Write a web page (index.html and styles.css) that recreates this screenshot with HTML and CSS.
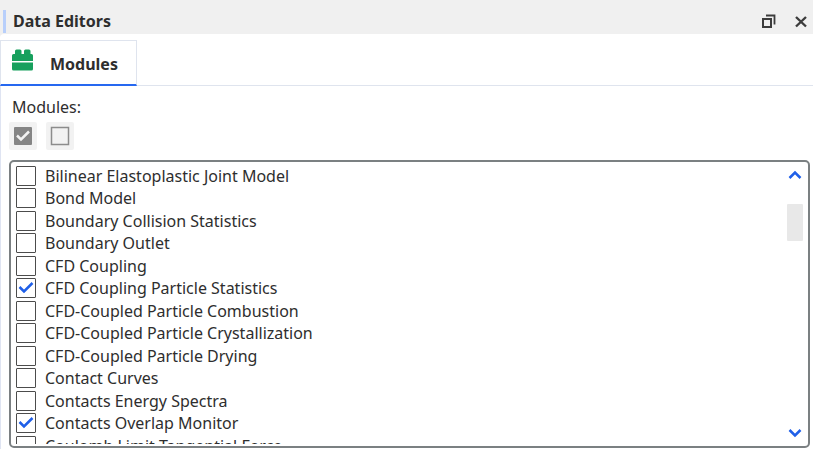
FILE: index.html
```html
<!DOCTYPE html>
<html lang="en">
<head>
    <meta charset="UTF-8">
    <meta name="viewport" content="width=device-width, initial-scale=1.0">
    <title>Data Editors</title>
    <link rel="stylesheet" href="styles.css">
</head>
<body>
    <header class="title-bar">
        <h1 class="title">Data Editors</h1>
        <button class="window-button" aria-label="Float">
            <svg width="16" height="16" viewBox="0 0 16 16" fill="none" stroke="#3c3c3c" stroke-width="2">
                <rect x="2" y="6" width="8" height="8"/>
                <path d="M5 2.500H13.500V11.500" stroke-width="1.800"/>
            </svg>
        </button>
        <button class="window-button" aria-label="Close">
            <svg width="16" height="16" viewBox="0 0 16 16" fill="none" stroke="#3c3c3c" stroke-width="2.400">
                <path d="M3 4L13 13.500M13 4L3 13.500"/>
            </svg>
        </button>
    </header>

    <main class="editor">
        <nav class="tabs">
            <button class="tab">
                <svg width="22" height="22" viewBox="0 0 22 22" fill="#17a05d">
                    <path d="M0 12V6.500Q0 5 1.500 5H3V2Q3 0.500 4.500 0.500H8Q9.500 0.500 9.500 2V5H12V2Q12 0.500 13.500 0.500H17Q18.500 0.500 18.500 2V5H19.500Q21 5 21 6.500V12Z"/>
                    <path d="M0 13.500H21V20Q21 21.500 19.500 21.500H1.500Q0 21.500 0 20Z"/>
                </svg>
                Modules
            </button>
        </nav>

        <section class="panel">
            <h2 class="label">Modules:</h2>
            <div class="toolbar">
                <button class="tool-button" aria-label="Check all">
                    <svg width="20" height="20" viewBox="0 0 20 20" fill="none">
                        <rect x="1" y="1" width="18" height="18" rx="1" fill="#858585"/>
                        <path d="M4 9.500L8 13.500L16 5.500" stroke="#f2f2f2" stroke-width="2.500"/>
                    </svg>
                </button>
                <button class="tool-button" aria-label="Uncheck all">
                    <svg width="20" height="20" viewBox="0 0 20 20" fill="none">
                        <rect x="1.500" y="1.500" width="17" height="17" stroke="#8c8c8c" stroke-width="1.500"/>
                    </svg>
                </button>
            </div>

            <div class="list-box">
                <div class="list">
                    <label class="item"><input type="checkbox">Bilinear Elastoplastic Joint Model</label>
                    <label class="item"><input type="checkbox">Bond Model</label>
                    <label class="item"><input type="checkbox">Boundary Collision Statistics</label>
                    <label class="item"><input type="checkbox">Boundary Outlet</label>
                    <label class="item"><input type="checkbox">CFD Coupling</label>
                    <label class="item"><input type="checkbox" checked>CFD Coupling Particle Statistics</label>
                    <label class="item"><input type="checkbox">CFD-Coupled Particle Combustion</label>
                    <label class="item"><input type="checkbox">CFD-Coupled Particle Crystallization</label>
                    <label class="item"><input type="checkbox">CFD-Coupled Particle Drying</label>
                    <label class="item"><input type="checkbox">Contact Curves</label>
                    <label class="item"><input type="checkbox">Contacts Energy Spectra</label>
                    <label class="item"><input type="checkbox" checked>Contacts Overlap Monitor</label>
                    <label class="item"><input type="checkbox">Coulomb Limit Tangential Force</label>
                </div>
                <div class="scrollbar">
                    <button class="scroll-button" aria-label="Scroll up">
                        <svg width="14" height="10" viewBox="0 0 14 10" fill="none" stroke="#1f5fe8" stroke-width="2.500">
                            <path d="M1.500 8L7 2.500L12.500 8"/>
                        </svg>
                    </button>
                    <div class="thumb"></div>
                    <button class="scroll-button" aria-label="Scroll down">
                        <svg width="14" height="10" viewBox="0 0 14 10" fill="none" stroke="#1f5fe8" stroke-width="2.500">
                            <path d="M1.500 2L7 7.500L12.500 2"/>
                        </svg>
                    </button>
                </div>
            </div>
        </section>
    </main>
</body>
</html>
```
FILE: styles.css
```css
* {
    box-sizing: border-box;
}
body {
    font-family: "Noto Sans", "Open Sans", sans-serif;
    font-size: 16px;
    color: #2e2e2e;
    background-color: #f0f0f0;
    margin: 0;
    height: 100vh;
    display: flex;
    flex-direction: column;
}
button {
    font: inherit;
    color: inherit;
    background: none;
    border: none;
    padding: 0;
    cursor: pointer;
}
svg {
    display: block;
}
.title-bar {
    display: flex;
    align-items: center;
    gap: 16px;
    height: 34px;
    padding: 8px 4px 0 3px;
}
.title {
    flex: 1;
    margin: 0;
    padding-left: 7px;
    border-left: 3px solid #b8cffb;
    font-size: 16px;
    line-height: 23px;
}
.editor {
    flex: 1;
    min-height: 0;
    display: flex;
    flex-direction: column;
    background-color: white;
    border-top-left-radius: 4px;
    padding-top: 6px;
}
.tabs {
    display: flex;
    border-bottom: 1px solid #dfe4ee;
}
.tab {
    display: flex;
    align-items: center;
    gap: 16px;
    height: 46px;
    margin-bottom: -1px;
    padding: 3px 18px 0 11px;
    border: 1px solid #dfe4ee;
    border-bottom: 2px solid #2668f0;
    font-size: 16px;
    font-weight: bold;
}
.tab svg {
    margin-bottom: 8px;
}
.panel {
    flex: 1;
    min-height: 0;
    display: flex;
    flex-direction: column;
    border-left: 1px solid #dfe4f2;
    padding: 10px 3px 1px 8px;
}
.label {
    margin: 0 0 3px 3px;
    font-size: 16px;
    font-weight: normal;
    line-height: 23px;
}
.toolbar {
    display: flex;
    gap: 9px;
    margin-bottom: 10px;
}
.tool-button {
    display: flex;
    align-items: center;
    justify-content: center;
    width: 28px;
    height: 28px;
    background-color: #f2f2f2;
    border-radius: 2px;
}
.list-box {
    flex: 1;
    min-height: 0;
    display: flex;
    border: 2px solid #7b8082;
    border-radius: 5px;
    padding: 2px 5px;
}
.list {
    flex: 1;
    overflow: hidden;
}
.item {
    display: flex;
    align-items: center;
    gap: 9px;
    height: 23px;
    font-size: 16px;
    line-height: 22px;
}
.item:nth-child(even) {
    height: 22px;
}
.item input {
    appearance: none;
    width: 20px;
    height: 20px;
    margin: 0;
    border: 1px solid #4c4c4c;
    border-radius: 1px;
}
.item input:checked {
    background: url("data:image/svg+xml,%3Csvg xmlns='http://www.w3.org/2000/svg' viewBox='0 0 18 18'%3E%3Cpath d='M2.500 8L7 12.500L15.500 4' fill='none' stroke='%231f5fe8' stroke-width='2.500'/%3E%3C/svg%3E") center / 18px 18px no-repeat;
}
.scrollbar {
    display: flex;
    flex-direction: column;
    align-items: center;
    width: 16px;
    padding: 6px 0;
}
.thumb {
    width: 16px;
    height: 37px;
    margin: 24px 0 auto;
    background-color: #e8e8e8;
    border-radius: 1px;
}
```
